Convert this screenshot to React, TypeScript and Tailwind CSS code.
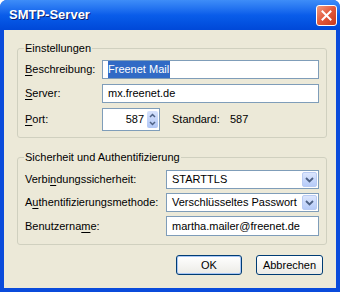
import type { ReactNode } from "react";

// XP-style "SMTP-Server" dialog

const font = { fontFamily: '"Liberation Sans", Arial, sans-serif' };

function Acc({ children }: { children: ReactNode }) {
  return <span className="underline underline-offset-[2px]">{children}</span>;
}

function TextBox({ children, className = "" }: { children: ReactNode; className?: string }) {
  return (
    <div
      className={`flex h-[19px] items-center border border-[#7F9DB9] bg-white pl-[5px] text-[11px] text-black ${className}`}
    >
      {children}
    </div>
  );
}

function ComboBox({ value }: { value: string }) {
  return (
    <div className="flex h-[19px] w-[153px] items-center justify-between border border-[#7F9DB9] bg-white pl-[5px] pr-[1px] text-[11px] text-black">
      <span>{value}</span>
      <span className="flex h-[15px] w-[15px] items-center justify-center rounded-[2px] border border-[#B9CBF3] bg-gradient-to-b from-[#DCE6FD] to-[#B6CBF8]">
        <svg width="9" height="6" viewBox="0 0 9 6">
          <path d="M1 1 L4.5 4.5 L8 1" fill="none" stroke="#4D6185" strokeWidth="1.8" />
        </svg>
      </span>
    </div>
  );
}

function Group({ title, children, className = "" }: { title: string; children: ReactNode; className?: string }) {
  return (
    <fieldset className={`rounded-[3px] border border-[#D0D0BF] px-[7px] ${className}`}>
      <legend className="ml-[-1px] px-[1px] text-[11px] leading-[13px] text-black">{title}</legend>
      {children}
    </fieldset>
  );
}

export default function App() {
  return (
    <div className="h-[294px] w-[344px] bg-white" style={font}>
      <div className="flex h-[292px] w-[340px] flex-col overflow-hidden rounded-t-[7px] bg-[#0A4BDB]">
        {/* Titelleiste */}
        <div className="flex h-[30px] shrink-0 items-center justify-between bg-gradient-to-b from-[#3E8DF8] via-[#0A5DEA] to-[#0048D8] pl-[9px] pr-[3px]">
          <span className="text-[13px] font-bold text-white [text-shadow:1px_1px_0_#0A1E6E]">SMTP-Server</span>
          <button
            type="button"
            aria-label="Schließen"
            className="flex h-[21px] w-[21px] items-center justify-center rounded-[3px] border border-white bg-gradient-to-br from-[#F0997E] via-[#E2583A] to-[#C8391C]"
          >
            <svg width="11" height="11" viewBox="0 0 11 11">
              <path d="M1.5 1.5 L9.5 9.5 M9.5 1.5 L1.5 9.5" stroke="white" strokeWidth="2" strokeLinecap="square" />
            </svg>
          </button>
        </div>

        {/* Inhalt */}
        <div className="mx-[4px] mb-[4px] flex flex-1 flex-col bg-[#ECE9D8] pl-[13px] pr-[11px] text-[11px] text-black">
          <Group title="Einstellungen" className="mt-[12px] pb-[6px] pt-[5px]">
            <div className="flex flex-col gap-[5px]">
              <div className="flex items-center">
                <span className="w-[77px]">
                  <Acc>B</Acc>eschreibung:
                </span>
                <TextBox className="w-[217px]">
                  <span className="bg-[#316AC5] pr-[1px] text-white">Freenet Mail</span>
                </TextBox>
              </div>
              <div className="flex items-center">
                <span className="w-[77px]">
                  <Acc>S</Acc>erver:
                </span>
                <TextBox className="w-[217px]">mx.freenet.de</TextBox>
              </div>
              <div className="flex items-center">
                <span className="w-[77px]">
                  <Acc>P</Acc>ort:
                </span>
                <div className="flex h-[23px] w-[58px] items-center justify-end gap-[3px] border border-[#7F9DB9] bg-white pr-[1px]">
                  <span>587</span>
                  <span className="flex h-[17px] w-[11px] flex-col overflow-hidden rounded-[2px] bg-gradient-to-b from-[#D6E2FC] to-[#B0C6F5]">
                    <span className="flex flex-1 items-center justify-center">
                      <svg width="7" height="5" viewBox="0 0 7 5">
                        <path d="M1 4 L3.5 1.5 L6 4" fill="none" stroke="#4D6185" strokeWidth="1.5" />
                      </svg>
                    </span>
                    <span className="flex flex-1 items-center justify-center">
                      <svg width="7" height="5" viewBox="0 0 7 5">
                        <path d="M1 1 L3.5 3.5 L6 1" fill="none" stroke="#4D6185" strokeWidth="1.5" />
                      </svg>
                    </span>
                  </span>
                </div>
                <span className="ml-[12px] w-[58px]">Standard:</span>
                <span>587</span>
              </div>
            </div>
          </Group>

          <Group title="Sicherheit und Authentifizierung" className="mt-[13px] pb-[8px] pt-[6px]">
            <div className="flex flex-col gap-[4px]">
              <div className="flex items-center">
                <span className="w-[141px]">
                  Verbi<Acc>n</Acc>dungssicherheit:
                </span>
                <ComboBox value="STARTTLS" />
              </div>
              <div className="flex items-center">
                <span className="w-[141px]">
                  A<Acc>u</Acc>thentifizierungsmethode:
                </span>
                <ComboBox value="Verschlüsseltes Passwort" />
              </div>
              <div className="flex items-center">
                <span className="w-[141px]">
                  Benutzerna<Acc>m</Acc>e:
                </span>
                <TextBox className="h-[20px] w-[153px]">martha.mailer@freenet.de</TextBox>
              </div>
            </div>
          </Group>

          <div className="mt-[10px] flex justify-end gap-[14px] pr-[2px]">
            <button
              type="button"
              className="h-[20px] w-[66px] rounded-[3px] border border-[#003C74] bg-gradient-to-b from-white to-[#ECEBE6] shadow-[inset_0_0_0_1px_#A9C7F5]"
            >
              OK
            </button>
            <button
              type="button"
              className="h-[20px] w-[67px] rounded-[3px] border border-[#003C74] bg-gradient-to-b from-white to-[#ECEBE6]"
            >
              Abbrechen
            </button>
          </div>
        </div>
      </div>
    </div>
  );
}
